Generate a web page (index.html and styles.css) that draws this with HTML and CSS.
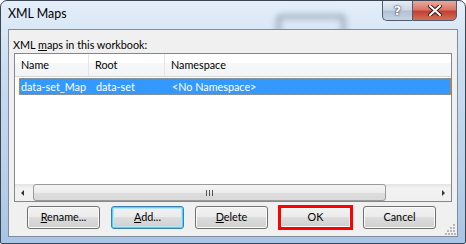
FILE: index.html
```html
<!DOCTYPE html>
<html>
<head>
    <title>XML Maps</title>
    <link rel="stylesheet" href="styles.css">
</head>
<body>
    <div class="window">
        <div class="titlebar">
            <span class="title">XML Maps</span>
            <div class="glass-shadow"></div>
            <div class="caption-buttons">
                <div class="cap help">?</div>
                <div class="cap close">
                    <svg width="14" height="11" viewBox="0 0 14 11">
                        <path d="M2 1 L12 10 M12 1 L2 10" stroke="#3b1a16" stroke-width="4" stroke-linecap="square"/>
                        <path d="M2 1 L12 10 M12 1 L2 10" stroke="#fff" stroke-width="2" stroke-linecap="square"/>
                    </svg>
                </div>
            </div>
        </div>
        <div class="client">
            <div class="label">XML <u>m</u>aps in this workbook:</div>
            <div class="listbox">
                <div class="lv-header">
                    <div class="col col-name">Name</div>
                    <div class="col col-root">Root</div>
                    <div class="col col-ns">Namespace</div>
                </div>
                <div class="lv-body">
                    <div class="lv-row selected">
                        <div class="cell cell-name">data-set_Map</div>
                        <div class="cell cell-root">data-set</div>
                        <div class="cell cell-ns">&lt;No Namespace&gt;</div>
                    </div>
                </div>
                <div class="hscroll">
                    <div class="arrow left"></div>
                    <div class="track">
                        <div class="thumb"><span class="grip-lines"></span></div>
                    </div>
                    <div class="arrow right"></div>
                </div>
            </div>
            <div class="buttons">
                <div class="btn"><u>R</u>ename...</div>
                <div class="btn default"><u>A</u>dd...</div>
                <div class="btn"><u>D</u>elete</div>
                <div class="btn marked">OK</div>
                <div class="btn">Cancel</div>
            </div>
            <svg class="size-grip" width="11" height="11" viewBox="0 0 11 11">
                <rect x="8" y="0" width="2" height="2" fill="#b8b8b8"/>
                <rect x="5" y="3" width="2" height="2" fill="#b8b8b8"/>
                <rect x="8" y="3" width="2" height="2" fill="#b8b8b8"/>
                <rect x="2" y="6" width="2" height="2" fill="#b8b8b8"/>
                <rect x="5" y="6" width="2" height="2" fill="#b8b8b8"/>
                <rect x="8" y="6" width="2" height="2" fill="#b8b8b8"/>
                <rect x="0" y="9" width="2" height="2" fill="#b8b8b8"/>
                <rect x="3" y="9" width="2" height="2" fill="#b8b8b8"/>
                <rect x="6" y="9" width="2" height="2" fill="#b8b8b8"/>
                <rect x="9" y="9" width="2" height="2" fill="#b8b8b8"/>
            </svg>
        </div>
    </div>
</body>
</html>
```
FILE: styles.css
```css
body {
    margin: 0;
    padding: 0;
    background: #ffffff;
    font-family: Lato, "Noto Sans", sans-serif;
    font-size: 10.8px;
    color: #000;
}
.window {
    box-sizing: border-box;
    width: 466px;
    height: 244px;
    border: 1px solid #3c4652;
    border-radius: 7px 7px 2px 2px;
    background: linear-gradient(180deg, #e4eef9 0%, #c9dcf0 30%, #b9d1ea 70%, #a9c5e4 100%);
    display: flex;
    flex-direction: column;
    position: relative;
    overflow: hidden;
}
.titlebar {
    height: 28px;
    display: flex;
    align-items: center;
    padding-left: 7px;
    position: relative;
}
.title {
    font-size: 12.4px;
    margin-top: -3px;
}
.glass-shadow {
    position: absolute;
    left: 276px;
    top: 14px;
    width: 62px;
    height: 20px;
    border: 3px solid rgba(40, 60, 80, 0.5);
    border-radius: 4px;
    filter: blur(3px);
}
.caption-buttons {
    position: absolute;
    right: 8px;
    top: -1px;
    display: flex;
}
.cap {
    box-sizing: border-box;
    height: 21px;
    border: 1px solid #4e5d6e;
    display: flex;
    align-items: center;
    justify-content: center;
}
.help {
    width: 30px;
    border-right: none;
    border-radius: 0 0 0 5px;
    background: linear-gradient(180deg, #e5ecf4 0%, #ccd8e5 45%, #b2c2d4 55%, #c6d4e3 100%);
    color: #fff;
    font-family: "DejaVu Sans", sans-serif;
    font-weight: bold;
    font-size: 13px;
    text-shadow: 0 0 2px #334, 0 0 1px #223;
}
.close {
    width: 45px;
    border-radius: 0 0 5px 0;
    background: linear-gradient(180deg, #e9a99b 0%, #d9776a 45%, #c5412f 55%, #d2705a 100%);
}
.client {
    box-sizing: border-box;
    margin: 0 7px;
    height: 208px;
    border: 1px solid #7f8d9c;
    background: #f0f0f0;
    padding: 0 5px;
    position: relative;
}
.label {
    margin: 7px 0 0 -1px;
    line-height: 15px;
}
.listbox {
    box-sizing: border-box;
    margin-top: 1px;
    height: 149px;
    border: 1px solid #828790;
    background: #fff;
    display: flex;
    flex-direction: column;
}
.lv-header {
    box-sizing: border-box;
    height: 23px;
    display: flex;
    background: linear-gradient(180deg, #ffffff 0%, #ffffff 40%, #f6f7f8 41%, #f3f4f5 100%);
    border-bottom: 1px solid #d5d5d5;
}
.col {
    box-sizing: border-box;
    line-height: 22px;
    padding-left: 6px;
    border-right: 1px solid #e3e5e8;
}
.col-name { width: 74px; }
.col-root { width: 76px; }
.col-ns { border-right: none; flex: 1; }
.lv-body {
    flex: 1;
    padding-top: 1px;
}
.lv-row {
    height: 17px;
    display: flex;
    margin-left: 4px;
    line-height: 15px;
    white-space: nowrap;
}
.lv-row.selected {
    background: #3399ff;
    color: #fff;
    border: 1px dotted #d08a3a;
    box-sizing: border-box;
}
.cell { box-sizing: border-box; }
.cell-name { width: 69px; padding-left: 1px; }
.cell-root { width: 76px; padding-left: 7px; }
.cell-ns { padding-left: 7px; }
.hscroll {
    height: 17px;
    display: flex;
    background: linear-gradient(180deg, #e3e3e3 0%, #f2f2f2 25%, #f0f0f0 100%);
}
.arrow {
    width: 17px;
    position: relative;
}
.arrow::after {
    content: "";
    position: absolute;
    top: 6px;
    border-top: 3px solid transparent;
    border-bottom: 3px solid transparent;
}
.arrow.left::after {
    left: 6px;
    border-right: 3px solid #333;
}
.arrow.right::after {
    left: 8px;
    border-left: 3px solid #333;
}
.track {
    flex: 1;
    padding: 0 48px 0 1px;
}
.thumb {
    box-sizing: border-box;
    height: 17px;
    border: 1px solid #9a9a9a;
    border-radius: 3px;
    background: linear-gradient(180deg, #f4f4f4 0%, #ececec 50%, #dedede 51%, #d8d8d8 100%);
    display: flex;
    align-items: center;
    justify-content: center;
}
.grip-lines {
    width: 7px;
    height: 6px;
    background: repeating-linear-gradient(90deg, #555 0 1px, transparent 1px 3px);
}
.buttons {
    display: flex;
    gap: 11px;
    padding-left: 13px;
    margin-top: 4px;
}
.btn {
    box-sizing: border-box;
    width: 73px;
    height: 23px;
    border: 1px solid #707070;
    border-radius: 3px;
    background: linear-gradient(180deg, #f2f2f2 0%, #ebebeb 49%, #dddddd 50%, #cfcfcf 100%);
    box-shadow: inset 0 0 0 1px #fafafa;
    text-align: center;
    line-height: 20px;
}
.btn.default {
    border-color: #3c7fb1;
    box-shadow: inset 0 0 0 1px #48d8fb, inset 0 0 0 2px #b4e6f8;
}
.btn.marked {
    border: 3px solid #ff0000;
    border-radius: 0;
    line-height: 17px;
    width: 75px;
    height: 25px;
    margin: -1px -1px 0 -1px;
}
.size-grip {
    position: absolute;
    right: 1px;
    bottom: 1px;
}
```
